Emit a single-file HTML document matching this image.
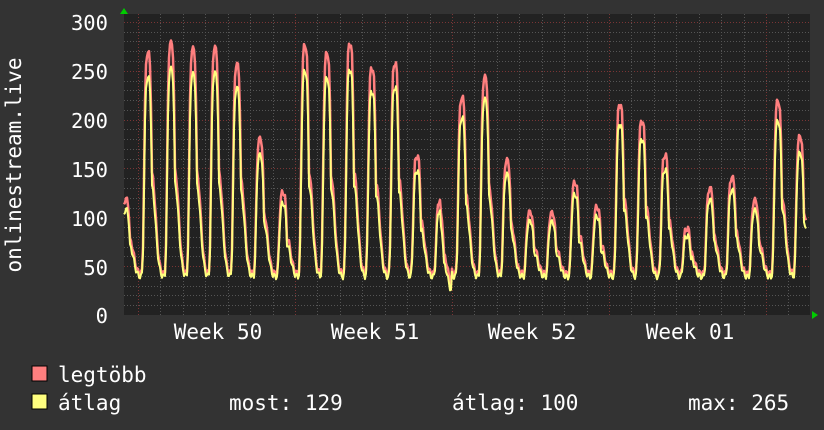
<!DOCTYPE html>
<html><head><meta charset="utf-8"><style>
html,body{margin:0;padding:0;background:#333;}
body{width:824px;height:430px;overflow:hidden;position:relative;font-family:"DejaVu Sans Mono","Liberation Mono",monospace;}
svg{position:absolute;left:0;top:0}
</style></head><body>
<svg id="g" width="824" height="430" xmlns="http://www.w3.org/2000/svg">
<rect x="0" y="0" width="824" height="430" fill="#333"/>
<rect x="124" y="14" width="686" height="301" fill="#222"/>
<g id="grid"></g>
<g id="data"></g>
<polygon points="120,14 128,14 124,8" fill="#0c0"/>
<polygon points="812,311 812,319 818,315" fill="#0c0"/>
<g fill="#fff" font-size="20.5" font-family="DejaVu Sans Mono, Liberation Mono, monospace" text-anchor="end">
<text x="108" y="30">300</text>
<text x="108" y="79">250</text>
<text x="108" y="128">200</text>
<text x="108" y="177">150</text>
<text x="108" y="226">100</text>
<text x="108" y="275">50</text>
<text x="108" y="323">0</text>
</g>
<g fill="#fff" font-size="21" font-family="DejaVu Sans Mono, Liberation Mono, monospace" text-anchor="middle">
<text x="218" y="339">Week 50</text>
<text x="375" y="339">Week 51</text>
<text x="532" y="339">Week 52</text>
<text x="690" y="339">Week 01</text>
<text transform="translate(21,165) rotate(-90)">onlinestream.live</text>
</g>
<rect x="32" y="366" width="15" height="15" fill="#ff7f7f" stroke="#000"/>
<rect x="32" y="394" width="15" height="15" fill="#ffff7f" stroke="#000"/>
<g fill="#fff" font-size="21" font-family="DejaVu Sans Mono, Liberation Mono, monospace">
<text x="58" y="382">legtöbb</text>
<text x="58" y="410">átlag</text>
<text x="229" y="410">most: 129</text>
<text x="452" y="410">átlag: 100</text>
<text x="688" y="410">max: 265</text>
</g>
</svg>
<script>
var NS="http://www.w3.org/2000/svg";
function el(p,t,a){var e=document.createElementNS(NS,t);for(var k in a)e.setAttribute(k,a[k]);p.appendChild(e);return e;}
var grid=document.getElementById('grid');
function Y(v){return 315-v*0.977;}
for(var v=10;v<=300;v+=10){var y=Math.round(Y(v))+0.5;var maj=v%50==0;
el(grid,'line',{x1:124,x2:810,y1:y,y2:y,stroke:maj?'#7a3535':'#555','stroke-dasharray':'1,2','stroke-width':1});}
for(var i=-1;i<31;i++){var x=Math.round(138+22.43*i)+0.5;if(x<124||x>810)continue;var maj=(i%7==0);
el(grid,'line',{x1:x,x2:x,y1:14,y2:315,stroke:maj?'#7a3535':'#555','stroke-dasharray':'1,2','stroke-width':1});}
var peaks=[[126,118],[148,268],[171,278],[193,272],[215,273],[237,256],[260,180],[283,125],[305,275],[327,267],[350,277],[372,252],[395,257],[417,162],[440,117],[462,222],[485,243],[507,158],[530,105],[552,104],[575,135],[597,110],[620,215],[642,198],[665,163],[687,88],[710,129],[732,140],[755,117],[778,218],[800,182]];
var mx=[],av=[];
for(var x=124;x<=806;x++){
 var base=42,vm=0,va=0;
 for(var j=0;j<peaks.length;j++){var d=x-peaks[j][0];var p=peaks[j][1];
  var g=Math.exp(-Math.pow(d/4.2,4));var s=Math.exp(-Math.pow((d-4)/5,2))*0.45;
  vm=Math.max(vm,(p-base)*Math.max(g,s*(d>0?1:0)));}
 var w=Math.sin(x*1.7)*3;
 var m=base+vm+w;var a=base-3+vm*0.9+w;
 if(x>440&&x<452){m-=15;a-=18;}
 mx.push(x+','+Y(m).toFixed(1));av.push(x+','+Y(a).toFixed(1));}
var dg=document.getElementById('data');
el(dg,'polyline',{points:mx.join(' '),fill:'none',stroke:'#ff7f7f','stroke-width':2.5,'stroke-linejoin':'round'});
el(dg,'polyline',{points:av.join(' '),fill:'none',stroke:'#ffff7f','stroke-width':2,'stroke-linejoin':'round'});
</script>
</body></html>
